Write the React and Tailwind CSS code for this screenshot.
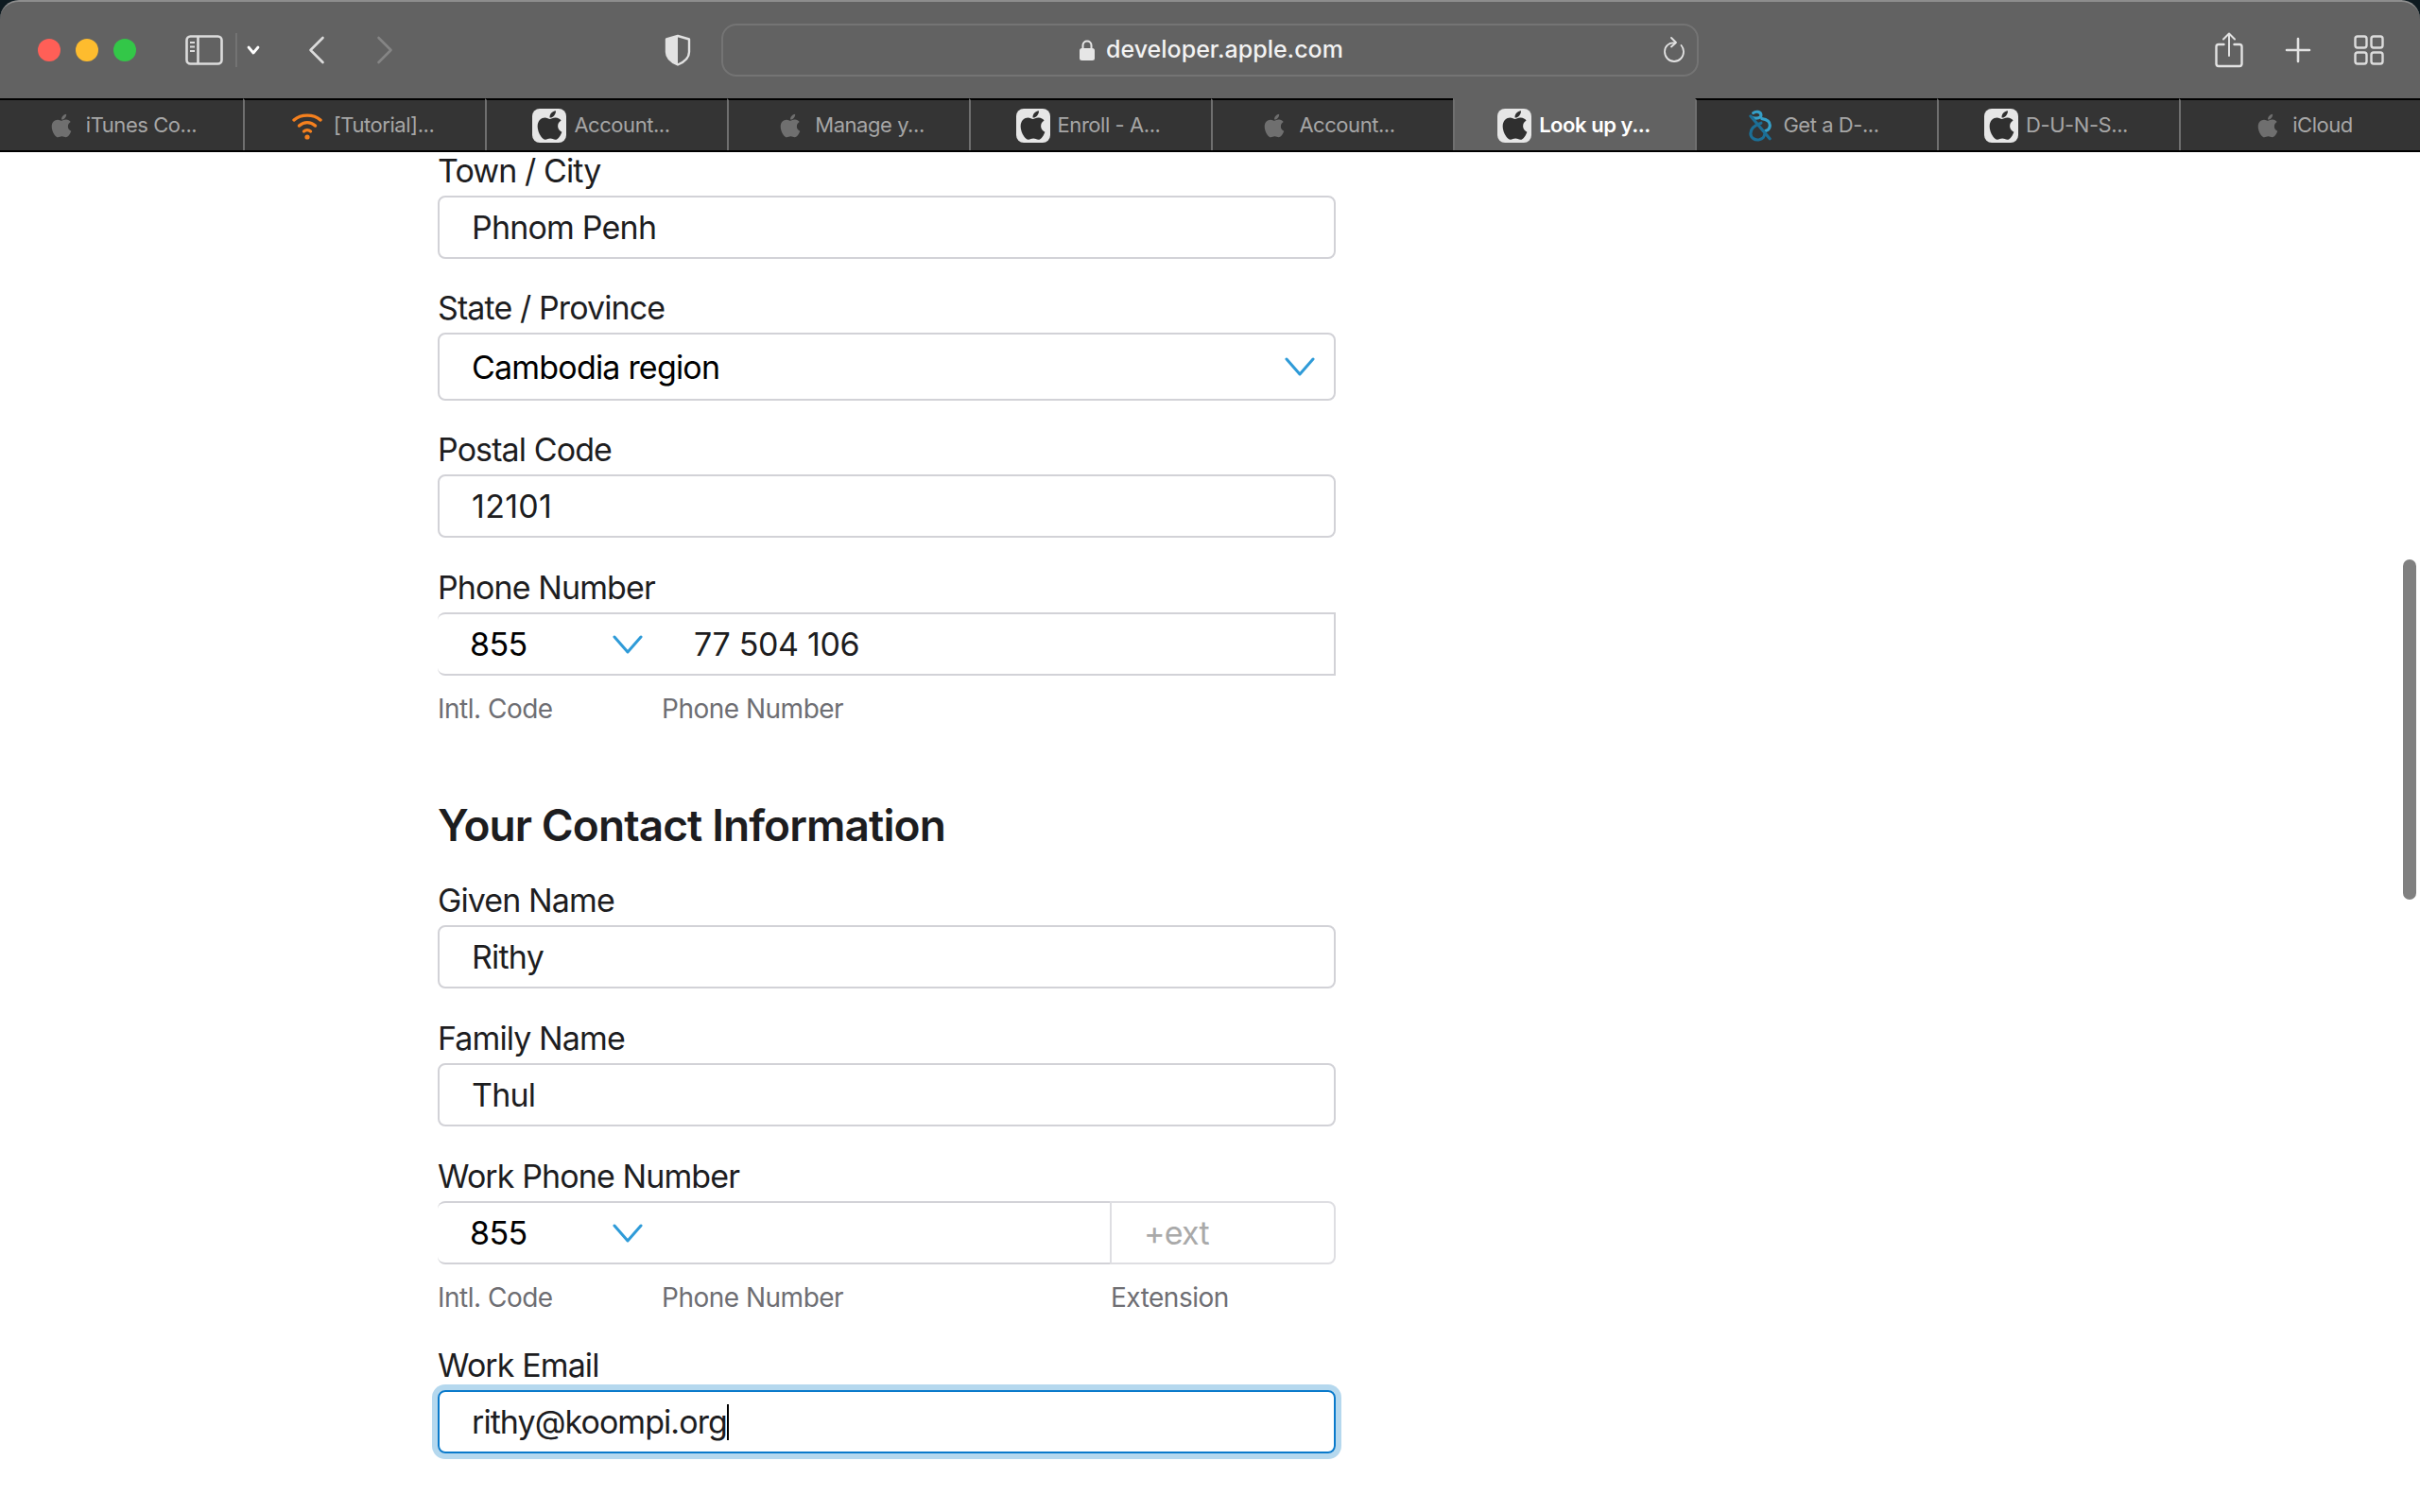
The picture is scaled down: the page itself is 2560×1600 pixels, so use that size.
import React from "react";
import { FaApple } from "react-icons/fa";

const font = { fontFamily: "Inter, 'Liberation Sans', sans-serif" };

function GrayApple() {
  return <FaApple className="w-[24px] h-[28px] text-[#6f6f6f] shrink-0" />;
}
function Favicon() {
  return (
    <div className="w-[36px] h-[36px] rounded-[8px] bg-[#e6e6e6] flex items-center justify-center shrink-0">
      <FaApple className="w-[35px] h-[35px] text-[#2f2f2f]" />
    </div>
  );
}
function Wifi() {
  return (
    <svg width="32" height="32" viewBox="0 0 32 32" fill="none" stroke="#f5801e" strokeWidth="3.4" strokeLinecap="round" className="shrink-0">
      <path d="M2 10C9.5 3.5 22.5 3.5 30 10" />
      <path d="M7.5 16C12.5 11.5 19.5 11.5 24.5 16" />
      <path d="M12.5 22C14.5 20.4 17.5 20.4 19.5 22" />
      <circle cx="16" cy="28" r="2.6" fill="#f5801e" stroke="none" />
    </svg>
  );
}
function Dnb() {
  return (
    <svg width="24" height="36" viewBox="0 0 26 36" fill="none" strokeWidth="3.4" strokeLinecap="round" className="shrink-0">
      <path d="M5 3.5C8 1 14 1.5 14 6C14 9 9 10 5 9" stroke="#35a0c8" />
      <path d="M15 10C21 10.5 25 14 24 19C23.5 22 21 23.5 19 24" stroke="#35a0c8" />
      <path d="M14 15C8 17 2 21 2 27C2 32 7 35 12 34C16 33 18 30 18 28" stroke="#1c6f96" />
      <path d="M2 7L24 33" stroke="#1c6f96" />
    </svg>
  );
}

const tabs = [
  { t: "iTunes Co...", i: "gray", pad: "pl-[4px]" },
  { t: "[Tutorial]...", i: "wifi", pad: "pr-[4px]" },
  { t: "Account...", i: "fav", pad: "pr-[12px]" },
  { t: "Manage y...", i: "gray", pad: "pl-[6px]" },
  { t: "Enroll - A...", i: "fav", pad: "pr-[6px]" },
  { t: "Account...", i: "gray", pad: "pr-[8px]" },
  { t: "Look up y...", i: "fav", active: true, pad: "pr-[2px]" },
  { t: "Get a D-...", i: "dnb", pad: "pr-[6px]" },
  { t: "D-U-N-S...", i: "fav", pad: "pr-[6px]" },
  { t: "iCloud", i: "gray", pad: "pl-[8px]" },
];

function Tab({ tab, first }) {
  const icon =
    tab.i === "gray" ? <GrayApple /> : tab.i === "wifi" ? <Wifi /> : tab.i === "fav" ? <Favicon /> : <Dnb />;
  const gap = tab.i === "fav" ? "gap-[8px]" : tab.i === "gray" ? "gap-[14px]" : "gap-[12px]";
  return (
    <div
      className={
        "shrink-0 h-full flex items-center justify-center " +
        gap +
        " " +
        tab.pad +
        " text-[22px] tracking-[-0.45px] " +
        (tab.active
          ? "bg-[#626262] text-white font-semibold border-t-2 border-[#626262]"
          : "bg-[#343434] text-[#a6a6a6] border-t-2 border-black") +
        (first ? " w-[257px]" : " w-[256px] border-l-2 border-l-[#6f6f6f]")
      }
    >
      {icon}
      <span className="whitespace-nowrap">{tab.t}</span>
    </div>
  );
}

function Chevron({ className = "" }) {
  return (
    <svg width="32" height="20" viewBox="0 0 32 20" fill="none" stroke="#2f9bd8" strokeWidth="3" strokeLinecap="round" strokeLinejoin="round" className={"shrink-0 " + className}>
      <path d="M2 2L16 18L30 2" />
    </svg>
  );
}

function Label({ children, mt = "" }) {
  return <div className={"h-[40px] leading-[39px] mb-[6px] text-[34px] tracking-[-0.9px] text-[#1d1d1f] " + mt}>{children}</div>;
}

function Input({ value, className = "tracking-[-0.8px]" }) {
  return (
    <div className={"h-[67px] border-2 border-[#d2d2d7] rounded-[8px] bg-white flex items-center pl-[34px] text-[34px] text-[#1d1d1f] " + className}>
      {value}
    </div>
  );
}

function CodeSelect() {
  return (
    <div className="w-[237px] h-full shrink-0 border-y-2 border-[#d2d2d7] rounded-l-[8px] flex items-center pl-[34px] pr-[20px] justify-between text-[34px] tracking-[-0.65px] text-black">
      <span>855</span>
      <Chevron />
    </div>
  );
}

function Sub({ className = "", children }) {
  return <div className={"text-[28px] tracking-[-0.5px] leading-[32px] text-[#6e6e73] " + className}>{children}</div>;
}

export default function App() {
  return (
    <div style={font} className="relative w-[2560px] h-[1600px] overflow-hidden bg-white">
      <div className="bg-[#0e1a20]">
        <div className="h-[104px] rounded-t-[20px] border-t-2 border-[#8d8d8d] bg-[#626262] flex items-center pl-[40px] pr-[38px]">
          <div className="flex items-center gap-[16px]">
            <div className="w-[24px] h-[24px] rounded-full bg-[#ff5f57]" />
            <div className="w-[24px] h-[24px] rounded-full bg-[#febc2e]" />
            <div className="w-[24px] h-[24px] rounded-full bg-[#33c748]" />
          </div>
          <svg width="40" height="32" viewBox="0 0 40 32" fill="none" stroke="#dcdcdc" strokeWidth="2.6" className="ml-[52px] shrink-0">
            <rect x="1.5" y="1.5" width="37" height="29" rx="4" />
            <path d="M13.5 2V30" />
            <path d="M5 8H10M5 12.5H10M5 17H10" strokeWidth="2" />
          </svg>
          <div className="w-[2px] h-[36px] bg-[#737373] ml-[13px]" />
          <svg width="14" height="10" viewBox="0 0 14 10" fill="none" stroke="#fff" strokeWidth="2.8" strokeLinecap="round" strokeLinejoin="round" className="ml-[10px] shrink-0">
            <path d="M2 2L7 8L12 2" />
          </svg>
          <svg width="18" height="30" viewBox="0 0 18 30" fill="none" stroke="#dcdcdc" strokeWidth="2.6" strokeLinecap="round" strokeLinejoin="round" className="ml-[51px] shrink-0">
            <path d="M15.5 2L2.5 15L15.5 28" />
          </svg>
          <svg width="18" height="30" viewBox="0 0 18 30" fill="none" stroke="#858585" strokeWidth="2.6" strokeLinecap="round" strokeLinejoin="round" className="ml-[54px] shrink-0">
            <path d="M2.5 2L15.5 15L2.5 28" />
          </svg>
          <svg width="28" height="34" viewBox="0 0 28 34" className="ml-[287px] shrink-0">
            <path d="M14 2L26 5.5V19C26 26 20 30 14 32.5C8 30 2 26 2 19V5.5Z" fill="none" stroke="#e2e2e2" strokeWidth="2.4" strokeLinejoin="round" />
            <path d="M14 2L2 5.5V19C2 26 8 30 14 32.5Z" fill="#e2e2e2" />
          </svg>
          <div className="relative ml-[32px] w-[1034px] h-[56px] border-2 border-[#747474] rounded-[16px] flex items-center justify-center gap-[12px] text-[25px] font-medium text-[#f2f2f2] shrink-0 pl-[3px]">
            <svg width="16" height="22" viewBox="0 0 16 22" className="shrink-0">
              <path d="M3.5 9V6C3.5 0 12.5 0 12.5 6V9" fill="none" stroke="#e6e6e6" strokeWidth="2" />
              <rect x="0" y="9" width="16" height="13" rx="2.5" fill="#e6e6e6" />
            </svg>
            <span>developer.apple.com</span>
            <svg width="24" height="28" viewBox="0 0 24 28" fill="none" stroke="#e2e2e2" strokeWidth="1.8" strokeLinecap="round" strokeLinejoin="round" className="absolute right-[12px] top-[12px]">
              <path d="M13 6.5C6.5 5.5 2 10 2 15.5C2 21.5 6.5 26 12 26C17.5 26 22 21.5 22 15.5C22 13 21 10.8 19.5 9" />
              <path d="M9 1L14 6L9 10.5" />
            </svg>
          </div>
          <div className="ml-auto flex items-center">
            <svg width="30" height="38" viewBox="0 0 30 38" fill="none" stroke="#e2e2e2" strokeWidth="2.4" strokeLinecap="round" strokeLinejoin="round" className="shrink-0">
              <path d="M9.5 13H4C2.5 13 1.5 14 1.5 15.5V33.5C1.5 35 2.5 36 4 36H26C27.5 36 28.5 35 28.5 33.5V15.5C28.5 14 27.5 13 26 13H20.5" />
              <path d="M15 25V2M9 7.5L15 1.5L21 7.5" strokeWidth="2" />
            </svg>
            <svg width="28" height="28" viewBox="0 0 28 28" fill="none" stroke="#e2e2e2" strokeWidth="2.6" strokeLinecap="round" className="ml-[44px] shrink-0">
              <path d="M14 2V26M2 14H26" />
            </svg>
            <svg width="32" height="32" viewBox="0 0 32 32" fill="none" stroke="#dcdcdc" strokeWidth="2.4" className="ml-[45px] shrink-0">
              <rect x="1.5" y="1.5" width="12" height="12" rx="2.5" />
              <rect x="18.5" y="1.5" width="12" height="12" rx="2.5" />
              <rect x="1.5" y="18.5" width="12" height="12" rx="2.5" />
              <rect x="18.5" y="18.5" width="12" height="12" rx="2.5" />
            </svg>
          </div>
        </div>
      </div>
      <div className="h-[57px] flex border-b-2 border-black bg-[#343434]">
        {tabs.map((tab, i) => (
          <Tab key={i} tab={tab} first={i === 0} />
        ))}
      </div>

      <div className="pl-[463px]">
        <div className="w-[950px]">
          <Label>Town / City</Label>
          <Input value="Phnom Penh" />

          <Label mt="mt-[32px]">State / Province</Label>
          <div className="h-[72px] border-2 border-[#d2d2d7] rounded-[8px] flex items-center justify-between pl-[34px] pr-[20px] text-[34px] tracking-[-0.8px] text-black">
            <span>Cambodia region</span>
            <Chevron />
          </div>

          <Label mt="mt-[32px]">Postal Code</Label>
          <Input value="12101" className="tracking-[0.3px]" />

          <Label mt="mt-[33px]">Phone Number</Label>
          <div className="h-[67px] flex">
            <CodeSelect />
            <div className="flex-1 border-y-2 border-r-2 border-[#d2d2d7] flex items-center pl-[34px] text-[34px] tracking-[-0.35px] text-[#1d1d1f]">
              77 504 106
            </div>
          </div>
          <div className="flex mt-[19px]">
            <Sub className="w-[237px]">Intl. Code</Sub>
            <Sub>Phone Number</Sub>
          </div>

          <h2 className="mt-[75px] h-[64px] leading-[64px] text-[46px] font-semibold tracking-[-0.9px] text-[#1d1d1f]">
            Your Contact Information
          </h2>

          <Label mt="mt-[28px]">Given Name</Label>
          <Input value="Rithy" />

          <Label mt="mt-[33px]">Family Name</Label>
          <Input value="Thul" />

          <Label mt="mt-[33px]">Work Phone Number</Label>
          <div className="h-[67px] flex">
            <CodeSelect />
            <div className="w-[474px] border-y-2 border-[#d2d2d7]" />
            <div className="flex-1 border-2 border-[#dedee2] rounded-r-[8px] flex items-center pl-[34px] text-[34px] tracking-[-0.8px] text-[#a9a9a9]">
              +ext
            </div>
          </div>
          <div className="flex mt-[19px]">
            <Sub className="w-[237px]">Intl. Code</Sub>
            <Sub className="w-[475px]">Phone Number</Sub>
            <Sub>Extension</Sub>
          </div>

          <Label mt="mt-[36px]">Work Email</Label>
          <div className="h-[67px] border-2 border-[#0a7acb] rounded-[8px] shadow-[0_0_0_6px_#b5d8ee] flex items-center pl-[34px] text-[34px] tracking-[-0.95px] text-[#1d1d1f]">
            <span>rithy@koompi.org</span>
            <span className="w-[2px] h-[38px] bg-black" />
          </div>
        </div>
      </div>

      <div className="absolute left-[2542px] top-[592px] w-[14px] h-[360px] rounded-full bg-[#808080]" />
    </div>
  );
}
